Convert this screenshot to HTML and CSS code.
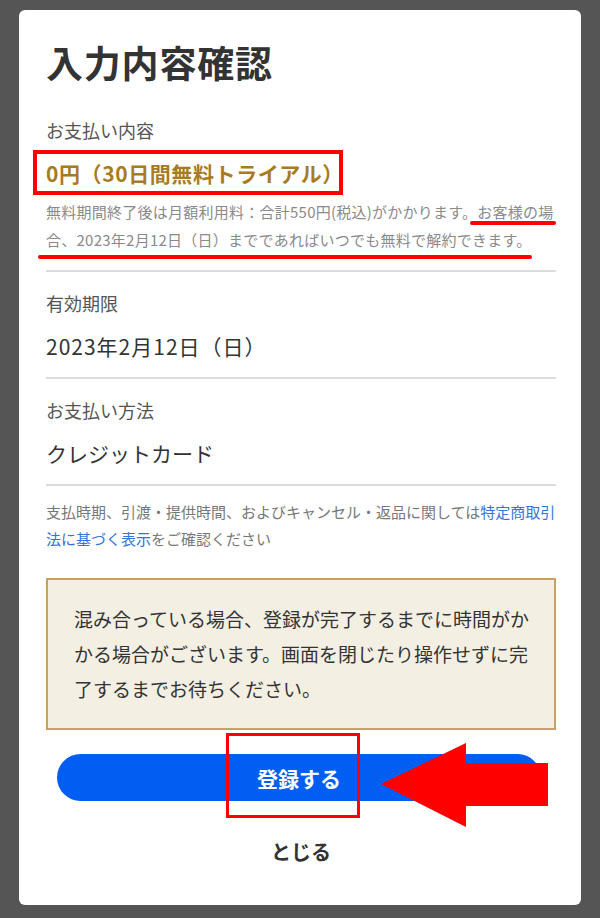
FILE: index.html
```html
<!DOCTYPE html>
<html lang="ja">
<head>
<meta charset="utf-8">
<title>入力内容確認</title>
<link rel="stylesheet" href="styles.css">
</head>
<body>
<div class="card">
  <h1 class="title">入力内容確認</h1>

  <section class="sec sec-first">
    <div class="label">お支払い内容</div>
    <div class="price">0円（30日間無料トライアル）</div>
    <p class="note">無料期間終了後は月額利用料：合計550円(税込)がかかります。お客様の場合、2023年2月12日（日）までであればいつでも無料で解約できます。</p>
  </section>
  <hr class="divider">

  <section class="sec">
    <div class="label">有効期限</div>
    <div class="value">2023年2月12日（日）</div>
  </section>
  <hr class="divider">

  <section class="sec">
    <div class="label">お支払い方法</div>
    <div class="value value-kana">クレジットカード</div>
  </section>
  <hr class="divider">

  <p class="fine">支払時期、引渡・提供時間、およびキャンセル・返品に関しては<a class="link" href="#">特定商取引法に基づく表示</a>をご確認ください</p>

  <div class="notice">混み合っている場合、登録が完了するまでに時間がかかる場合がございます。画面を閉じたり操作せずに完了するまでお待ちください。</div>

  <button class="submit" type="button">登録する</button>
  <div class="close">とじる</div>

  <div class="mark mark-price"></div>
  <div class="uline uline-1"></div>
  <div class="uline uline-2"></div>
  <div class="mark mark-button"></div>
  <svg class="arrow" width="170" height="86" viewBox="0 0 170 86">
    <polygon points="0,41 85,0 85,20 167,20 167,63 85,63 85,84" fill="#ff0000"/>
  </svg>
</div>
</body>
</html>
```

FILE: styles.css
```css
* { box-sizing: border-box; }
html, body { margin: 0; padding: 0; }
body {
  background: #555555;
  font-family: "Noto Sans CJK JP", "Noto Sans", sans-serif;
  color: #333;
  width: 600px;
  height: 918px;
  overflow: hidden;
}
.card {
  position: relative;
  margin: 10px 19px 0 19px;
  background: #fff;
  border-radius: 6px;
  padding: 27px 25px 38px 27px;
  display: flex;
  flex-direction: column;
}
.title {
  margin: 0;
  font-size: 37px;
  line-height: 50px;
  font-weight: 700;
  color: #333;
  letter-spacing: 0.8px;
}
.sec { display: flex; flex-direction: column; }
.sec-first { margin-top: 30px; }
.label {
  font-size: 18px;
  line-height: 26px;
  color: #555;
  margin-top: 18px;
}
.sec-first .label { margin-top: 0; }
.price {
  margin-top: 15px;
  font-size: 21px;
  line-height: 30px;
  font-weight: 700;
  color: #a87b22;
  letter-spacing: 0.6px;
}
.note {
  margin: 10px 0 0 0;
  font-size: 15px;
  line-height: 28px;
  color: #8a8a8a;
  letter-spacing: 0.25px;
}
.value {
  margin-top: 15px;
  font-size: 21px;
  line-height: 30px;
  color: #333;
  letter-spacing: 1px;
}
.value-kana { letter-spacing: 0; }
.divider {
  margin: 8px 0 0 0;
  border: 0;
  height: 2px;
  background: #dcdcdc;
}
.sec + .divider { margin-top: 16px; }
.fine {
  margin: 12px 0 0 0;
  font-size: 15px;
  line-height: 27px;
  color: #777;
}
.link { color: #3573d4; text-decoration: none; }
.notice {
  margin-top: 26px;
  background: #f4efe3;
  border: 2px solid #c9a165;
  padding: 21px 20px 22px 26px;
  font-size: 19px;
  line-height: 35px;
  color: #333;
}
.submit {
  margin: 24px 15px 0 11px;
  height: 47px;
  border: 0;
  border-radius: 24px;
  background: #005ff2;
  color: #fff;
  font-family: inherit;
  font-size: 21px;
  font-weight: 700;
  padding: 0;
}
.close {
  margin-top: 36px;
  text-align: center;
  font-size: 20px;
  line-height: 30px;
  font-weight: 700;
  color: #333;
}
.mark {
  position: absolute;
  border: 4px solid #ff0000;
}
.mark-price { left: 14px; top: 140px; width: 310px; height: 45px; }
.mark-button { left: 207px; top: 723px; width: 134px; height: 85px; border-width: 3px; }
.uline {
  position: absolute;
  height: 4px;
  background: #ff0000;
  border-radius: 2px;
}
.uline-1 { left: 451px; top: 211px; width: 86px; }
.uline-2 { left: 19px; top: 245px; width: 494px; }
.arrow { position: absolute; left: 362px; top: 733px; }
```
